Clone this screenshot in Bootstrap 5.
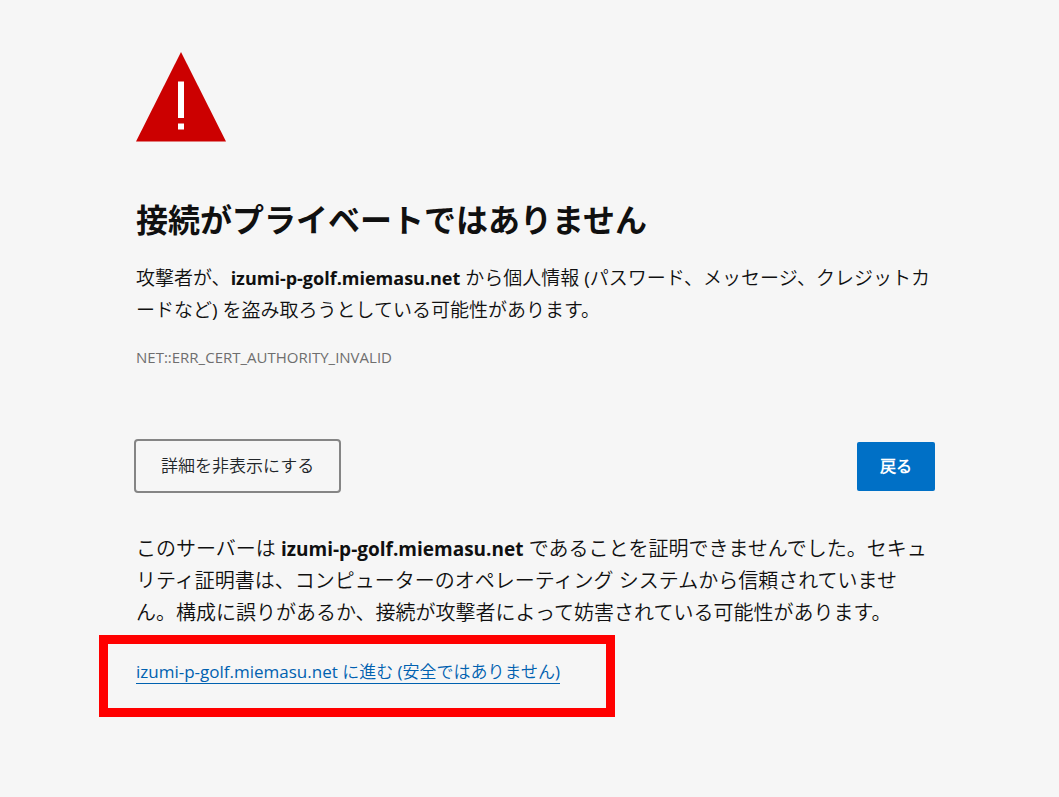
<!DOCTYPE html>
<html lang="ja">
<head>
<meta charset="utf-8">
<meta name="viewport" content="width=device-width, initial-scale=1">
<title>プライバシー エラー</title>
<link href="https://cdn.jsdelivr.net/npm/bootstrap@5.3.0/dist/css/bootstrap.min.css" rel="stylesheet">
<style>
body { background: #f6f6f6; color: #101010; font-family: "Open Sans", "Noto Sans CJK JP DemiLight", "Noto Sans CJK JP", sans-serif; }
.interstitial { max-width: 799px; margin-left: 136px; padding-top: 52px; }
.warning-icon { width: 90px; height: 90px; }
h1 { font-family: "Noto Sans CJK JP", sans-serif; font-size: 32px; line-height: 44px; margin: 54px 0 22px; }
.summary { font-size: 19px; line-height: 32px; margin-bottom: 15px; }
.summary strong { font-size: 18px; }
.error-code { font-size: 15px; line-height: 32px; color: #6e6e6e; margin-bottom: 66px; }
.btn-details { border: 2px solid #858585; border-radius: 4px; font-size: 17px; height: 54px; padding: 0 25px; margin-left: -2px; }
.btn-details:hover { border-color: #858585; }
.btn-back, .btn-back:hover { background: #0070c6; color: #fff; }
.btn-back { border: 0; border-radius: 2px; font-size: 16px; font-weight: 700; height: 49px; padding: 0 23px; }
.explanation { font-size: 20px; line-height: 32px; margin: 40px 0 6px; }
.explanation strong { font-size: 19px; }
.proceed-box { border: 9px solid #f00; max-width: 516px; margin-left: -37px; padding: 16px 28px 24px; line-height: 24px; }
.proceed-box a { color: #0061b0; font-size: 17px; text-decoration: none; border-bottom: 1px solid #0061b0; line-height: 22px; }
</style>
</head>
<body>
<main class="interstitial">
  <svg class="warning-icon d-block" viewBox="0 0 90 90" aria-hidden="true"><path fill="#c00" d="M45 0 90 89.500H0z"/><path fill="#fff" d="M42 29.500h6v36.500h-6zM42 71.500h6v6h-6z"/></svg>
  <h1 class="fw-bold">接続がプライベートではありません</h1>
  <p class="summary">攻撃者が、<strong>izumi-p-golf.miemasu.net</strong> から個人情報 (パスワード、メッセージ、クレジットカードなど) を盗み取ろうとしている可能性があります。</p>
  <p class="error-code">NET::ERR_CERT_AUTHORITY_INVALID</p>
  <div class="d-flex justify-content-between align-items-center">
    <button type="button" class="btn btn-details">詳細を非表示にする</button>
    <button type="button" class="btn btn-back">戻る</button>
  </div>
  <p class="explanation">このサーバーは <strong>izumi-p-golf.miemasu.net</strong> であることを証明できませんでした。セキュリティ証明書は、コンピューターのオペレーティング システムから信頼されていません。構成に誤りがあるか、接続が攻撃者によって妨害されている可能性があります。</p>
  <div class="proceed-box"><a href="#">izumi-p-golf.miemasu.net に進む (安全ではありません)</a></div>
</main>
<script src="https://cdn.jsdelivr.net/npm/bootstrap@5.3.0/dist/js/bootstrap.bundle.min.js"></script>
</body>
</html>
